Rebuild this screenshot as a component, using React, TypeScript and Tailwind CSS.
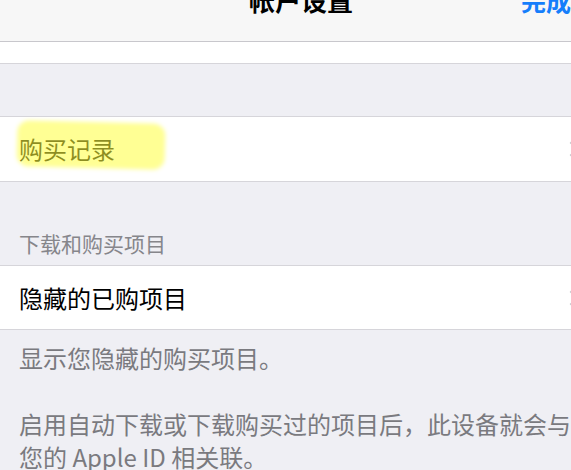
const font = { fontFamily: '"Noto Sans CJK SC", "Noto Sans", sans-serif' }

function Chevron() {
  return (
    <svg width="12" height="16" viewBox="0 0 12 16" className="shrink-0 -mr-[10px]">
      <path d="M1.5 1 L8.5 8 L1.5 15" fill="none" stroke="#c7c7cc" strokeWidth="2.5" />
    </svg>
  )
}

export default function App() {
  return (
    <div
      className="w-[571px] h-[470px] overflow-hidden bg-[#efeff4] text-black flex flex-col"
      style={font}
    >
      {/* Nav bar */}
      <div className="h-[42px] shrink-0 bg-[#f7f7f7] border-b border-[#c8c7cc] flex items-start overflow-hidden">
        <span className="ml-[249px] -mt-[13px] text-[26px] leading-none font-semibold whitespace-nowrap">
          帐户设置
        </span>
        <span className="ml-auto -mt-[12px] text-[25px] leading-none font-semibold text-[#157efb] whitespace-nowrap">
          完成
        </span>
      </div>

      {/* Row peeking under the nav */}
      <div className="h-[22px] shrink-0 bg-white border-b border-[#d6d5da]" />

      <div className="h-[52px] shrink-0" />

      {/* 购买记录 */}
      <div className="relative h-[66px] shrink-0 bg-white border-y border-[#d6d5da] flex items-center justify-between pl-[19px] overflow-hidden">
        <span className="text-[24px] leading-none text-[#1a1a1a]">购买记录</span>
        <Chevron />
        {/* highlighter mark */}
        <div className="absolute left-[17px] top-[5px] w-[148px] h-[46px] rounded-[12px] bg-[#ffff2a]/50 blur-[2px] rotate-[1.5deg]" />
      </div>

      {/* Section header */}
      <div className="h-[83px] shrink-0 flex items-end pl-[19px] pb-[11px]">
        <span className="text-[21px] leading-none text-[#86868b]">下载和购买项目</span>
      </div>

      {/* 隐藏的已购项目 */}
      <div className="h-[65px] shrink-0 bg-white border-y border-[#d6d5da] flex items-center justify-between pl-[19px] overflow-hidden">
        <span className="text-[24px] leading-none">隐藏的已购项目</span>
        <Chevron />
      </div>

      {/* Footer */}
      <div className="pl-[19px] pt-[11px] text-[24px] leading-[33px] text-[#7a7a7f] whitespace-nowrap">
        <p>显示您隐藏的购买项目。</p>
        <p className="mt-[33px]">
          启用自动下载或下载购买过的项目后，此设备就会与
          <br />
          您的 Apple ID 相关联。
        </p>
      </div>
    </div>
  )
}
